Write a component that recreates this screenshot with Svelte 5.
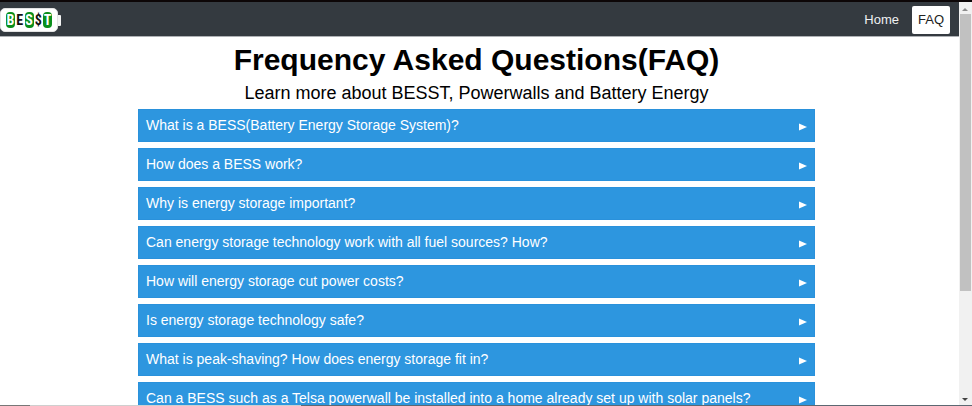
<script>
  const questions = [
    'What is a BESS(Battery Energy Storage System)?',
    'How does a BESS work?',
    'Why is energy storage important?',
    'Can energy storage technology work with all fuel sources? How?',
    'How will energy storage cut power costs?',
    'Is energy storage technology safe?',
    'What is peak-shaving? How does energy storage fit in?',
    'Can a BESS such as a Telsa powerwall be installed into a home already set up with solar panels?'
  ];
</script>

<div class="page">
  <div class="view">
    <header>
      <a class="logo" href="#home" aria-label="BESST">
        <span class="cell">
          <span class="on">B</span><span>E</span><span class="on">S</span><span>$</span><span class="on">T</span>
        </span>
        <span class="tip"></span>
      </a>
      <nav>
        <a href="#home">Home</a>
        <a href="#faq" class="active">FAQ</a>
      </nav>
    </header>
    <main>
      <h1>Frequency Asked Questions(FAQ)</h1>
      <p>Learn more about BESST, Powerwalls and Battery Energy</p>
      <div class="list">
        {#each questions as q}
          <button type="button">
            <span>{q}</span>
            <svg width="8" height="8" viewBox="0 0 8 8" aria-hidden="true"><path d="M0 .5 8 4 0 7.5z" fill="#fff" /></svg>
          </button>
        {/each}
      </div>
    </main>
  </div>
  <div class="scrollbar" aria-hidden="true">
    <svg width="12" height="10" viewBox="0 0 12 10"><path d="M3 7 6 4l3 3z" fill="#8c8c8c" /></svg>
    <div class="track"><div class="thumb"></div></div>
    <svg width="12" height="12" viewBox="0 0 12 12"><path d="M3 4h6L6 7z" fill="#444" /></svg>
  </div>
  <div class="edge" aria-hidden="true"><i></i><i></i><i></i></div>
</div>

<style>
  :global(body) {
    margin: 0;
    background: #fff;
  }
  .page {
    position: relative;
    display: flex;
    box-sizing: border-box;
    height: 100vh;
    overflow: hidden;
    font-family: 'Liberation Sans', Arial, sans-serif;
    color: #000;
  }
  .view {
    flex: 1;
    min-width: 0;
    overflow: hidden;
  }
  header {
    display: flex;
    align-items: center;
    justify-content: space-between;
    box-sizing: border-box;
    height: 37px;
    padding: 3px 9px 1px 0;
    background: #343a40;
    border-top: 2px solid #0c0607;
    border-bottom: 1px solid #aeb1b5;
  }
  .logo {
    display: flex;
    align-items: center;
    text-decoration: none;
  }
  .cell {
    display: flex;
    align-items: center;
    justify-content: space-between;
    box-sizing: border-box;
    width: 58px;
    height: 24px;
    padding: 0 5px;
    border-radius: 5px;
    background: #fff;
    border: 1px solid #e3e3e3;
    font: 700 14px/16px 'Roboto Condensed', 'Open Sans Condensed', 'Roboto', sans-serif;
    color: #111;
  }
  .cell span {
    width: 8px;
    text-align: center;
  }
  .cell .on {
    width: 9px;
    border-radius: 4px;
    background: #0b8f1c;
    color: #fff;
  }
  .tip {
    width: 3px;
    height: 11px;
    background: #f4f4f4;
    border-radius: 0 1px 1px 0;
  }
  nav {
    display: flex;
    gap: 7px;
  }
  nav a {
    padding: 0 6px;
    border-radius: 2px;
    font-size: 13px;
    line-height: 28px;
    color: #f0f1f2;
    text-decoration: none;
  }
  nav a.active {
    background: #fff;
    color: #222;
  }
  main {
    padding: 6px 144px 0 138px;
    text-align: center;
  }
  h1 {
    margin: 0;
    font-size: 30px;
    line-height: 34px;
    white-space: nowrap;
  }
  p {
    margin: 6px 0;
    font-size: 18px;
    line-height: 20px;
    white-space: nowrap;
  }
  .list {
    display: flex;
    flex-direction: column;
    gap: 6px;
  }
  button {
    display: flex;
    align-items: center;
    justify-content: space-between;
    box-sizing: border-box;
    height: 33px;
    padding: 0 7px 2px;
    border: 1px solid #2a91db;
    background: #2d96df;
    color: #fff;
    font-family: inherit;
    font-size: 14px;
    line-height: 16px;
    text-align: left;
    cursor: pointer;
  }
  button svg {
    margin-top: 4px;
  }
  .scrollbar {
    display: flex;
    flex-direction: column;
    box-sizing: border-box;
    width: 13px;
    padding: 2px 1px 0 0;
    background: #f1f1f1;
    border-top: 2px solid #0c0607;
  }
  .track {
    flex: 1;
    padding: 0 0 0 1px;
  }
  .thumb {
    height: 73%;
    background: #c1c1c1;
  }
  .edge {
    position: absolute;
    left: 0;
    right: 0;
    bottom: 0;
    display: flex;
    height: 1px;
  }
  .edge i {
    flex: 27;
    background: #cfcfcf;
  }
  .edge i:first-child {
    flex: 3;
    background: #777;
  }
  .edge i:last-child {
    flex: 67;
    background: #5c6872;
  }
</style>
